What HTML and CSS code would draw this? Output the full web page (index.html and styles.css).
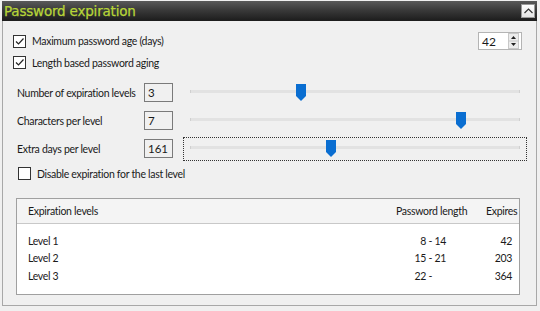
FILE: index.html
```html
<!DOCTYPE html>
<html>
<head>
<meta charset="utf-8">
<link rel="stylesheet" href="styles.css">
</head>
<body>
<div class="panel">
  <div class="titlebar">
    <span class="title">Password expiration</span>
    <span class="collapse"><svg width="11" height="8" viewBox="0 0 11 8"><path d="M1.5 6 L5.5 2 L9.5 6" fill="none" stroke="#333" stroke-width="1.2"/></svg></span>
  </div>
  <div class="content">
    <div class="row-top">
      <label class="check"><span class="box checked"><svg width="11" height="11" viewBox="0 0 11 11"><path d="M2 5.5 L4.5 8 L9.5 2.5" fill="none" stroke="#222" stroke-width="1.2"/></svg></span>Maximum password age (days)</label>
      <div class="spin"><span class="spin-val">42</span><span class="spin-btns"><svg width="11" height="16" viewBox="0 0 11 16"><rect x="0.5" y="0.5" width="10" height="15" fill="#ececec" stroke="#c8c8c8"/><line x1="1" y1="8" x2="10" y2="8" stroke="#c8c8c8"/><path d="M3 6 L5.5 3 L8 6 Z" fill="#222"/><path d="M3 10 L5.5 13 L8 10 Z" fill="#222"/></svg></span></div>
    </div>
    <label class="check second"><span class="box checked"><svg width="11" height="11" viewBox="0 0 11 11"><path d="M2 5.5 L4.5 8 L9.5 2.5" fill="none" stroke="#222" stroke-width="1.2"/></svg></span>Length based password aging</label>

    <div class="levels">
      <div class="lrow">
        <span class="lbl">Number of expiration levels</span>
        <span class="tb">3</span>
        <div class="slider"><div class="track"></div><span class="thumb" style="left:106px"></span></div>
      </div>
      <div class="lrow">
        <span class="lbl">Characters per level</span>
        <span class="tb">7</span>
        <div class="slider"><div class="track"></div><span class="thumb" style="left:266px"></span></div>
      </div>
      <div class="lrow">
        <span class="lbl">Extra days per level</span>
        <span class="tb">161</span>
        <div class="slider focus"><div class="track"></div><span class="thumb" style="left:143px"></span></div>
      </div>
    </div>

    <label class="check third"><span class="box"></span>Disable expiration for the last level</label>

    <div class="list">
      <div class="lhead">
        <span class="c1">Expiration levels</span>
        <span class="c2">Password length</span>
        <span class="c3">Expires</span>
      </div>
      <div class="lbody">
        <div class="item"><span class="c1">Level 1</span><span class="c2"><span class="from">8</span> - 14</span><span class="c3">42</span></div>
        <div class="item"><span class="c1">Level 2</span><span class="c2"><span class="from">15</span> - 21</span><span class="c3">203</span></div>
        <div class="item"><span class="c1">Level 3</span><span class="c2"><span class="from">22</span> -</span><span class="c3">364</span></div>
      </div>
    </div>
  </div>
</div>
</body>
</html>
```
FILE: styles.css
```css
html, body {
  margin: 0;
  padding: 0;
  background: #f0f0f0;
  width: 540px;
  height: 311px;
  overflow: hidden;
  font-family: Lato, "Liberation Sans", Arial, sans-serif;
  font-size: 10.5px;
  letter-spacing: -0.3px;
  color: #1a1a1a;
}
.panel {
  margin: 1px 3px 0 2px;
}
.titlebar {
  height: 20px;
  background: linear-gradient(#5a5a5a, #3a3a3a 45%, #1c1c1c);
  display: flex;
  align-items: center;
  justify-content: space-between;
  padding: 0 2px 0 2px;
}
.title {
  font-family: "DejaVu Sans", sans-serif;
  font-size: 13.5px;
  color: #b7d538;
  letter-spacing: -0.2px;
  -webkit-text-stroke: 0.25px #b7d538;
}
.collapse {
  width: 14px;
  height: 14px;
  background: linear-gradient(#ffffff, #e4e4e4);
  border: 1px solid #9a9a9a;
  box-sizing: border-box;
  display: flex;
  align-items: center;
  justify-content: center;
}
.content {
  border: 1px solid #a8a8a8;
  border-top: none;
  height: 285px;
  box-sizing: border-box;
}
.row-top {
  display: flex;
  justify-content: space-between;
  align-items: center;
  padding: 11px 14px 0 10px;
}
.check {
  display: flex;
  align-items: center;
  gap: 6px;
}
.check.second {
  padding: 6px 0 0 10px;
}
.check.third {
  padding: 9px 0 0 15px;
}
.box {
  width: 13px;
  height: 13px;
  box-sizing: border-box;
  border: 1px solid #333;
  background: #fff;
  display: flex;
  align-items: center;
  justify-content: center;
}
.spin {
  width: 44px;
  height: 18px;
  box-sizing: border-box;
  border: 1px solid #b4b4b4;
  background: #fff;
  display: flex;
  align-items: center;
  justify-content: space-between;
  padding: 0 2px 0 3px;
  font-size: 12px;
  letter-spacing: 0;
}
.spin-btns {
  display: flex;
}
.levels {
  display: flex;
  flex-direction: column;
  gap: 9px;
  padding: 14px 0 0 14px;
}
.lrow {
  display: grid;
  grid-template-columns: 127px 29px 1fr;
  align-items: center;
  height: 19px;
}
.lbl {
  white-space: nowrap;
}
.tb {
  height: 19px;
  box-sizing: border-box;
  border: 1px solid #7a7a7a;
  background: #f0f0f0;
  padding: 2px 0 0 3px;
  font-size: 11.5px;
  letter-spacing: 0;
}
.slider {
  position: relative;
  height: 19px;
  margin: 0 16px 0 17px;
}
.slider.focus {
  margin: -2px 9px -3px 10px;
  height: 24px;
  outline: 1px dotted #333;
  outline-offset: -1px;
}
.track {
  position: absolute;
  left: 0;
  right: 0;
  top: 7px;
  height: 3px;
  background: #e2e2e2;
  border-left: 1px solid #d0d0d0;
  border-right: 1px solid #d0d0d0;
}
.slider.focus .track {
  left: 7px;
  right: 7px;
  top: 9px;
}
.thumb {
  position: absolute;
  top: 1px;
  width: 10px;
  height: 17px;
  background: #0a6ed1;
  clip-path: polygon(0 0, 100% 0, 100% 70%, 50% 100%, 0 70%);
}
.slider.focus .thumb {
  top: 3px;
}
.list {
  margin: 18px 16px 0 13px;
  border: 1px solid #a0a0a0;
  background: #fff;
  height: 97px;
  box-sizing: border-box;
}
.lhead {
  display: flex;
  height: 24px;
  align-items: center;
  background: #f4f4f4;
  border-bottom: 1px solid #c8c8c8;
  white-space: nowrap;
}
.lbody {
  padding-top: 8px;
}
.item {
  display: flex;
  height: 17.5px;
  align-items: center;
  white-space: nowrap;
}
.c1 {
  flex: 1;
  padding-left: 11px;
}
.c2 {
  width: 90px;
}
.from {
  display: inline-block;
  width: 30px;
  text-align: right;
}
.c3 {
  width: 33px;
  text-align: right;
  padding-right: 7px;
  box-sizing: border-box;
}
.lhead .c3 {
  text-align: left;
  padding-right: 0;
}
```
